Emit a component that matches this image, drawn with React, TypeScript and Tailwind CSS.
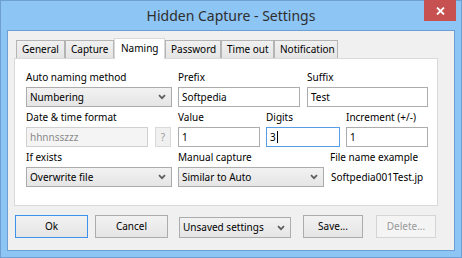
import React from 'react';

const font = "font-['Noto_Sans','Segoe_UI',sans-serif]";

const Chevron = () => (
    <svg width="8" height="6" viewBox="0 0 8 6" className="shrink-0">
        <path d="M1 1.2 L4 4.2 L7 1.2" fill="none" stroke="#5c5c5c" strokeWidth="1.7" />
    </svg>
);

const Select = ({ value, w }: { value: string; w: string }) => (
    <div className={`${w} h-[20px] border border-[#acacac] bg-gradient-to-b from-[#f2f2f2] to-[#e5e5e5] flex items-center justify-between pl-[3px] pr-[5px] text-[10px] text-black`}>
        <span>{value}</span>
        <Chevron />
    </div>
);

const Field = ({ value, w, focus }: { value: string; w: string; focus?: boolean }) => (
    <div className={`${w} h-[20px] border ${focus ? 'border-[#569de5]' : 'border-[#acacac]'} bg-white flex items-center pl-[3px] text-[10px] text-black`}>
        <span>{value}</span>
        {focus && <span className="w-px h-[12px] bg-black ml-px" />}
    </div>
);

const Label = ({ text, w }: { text: string; w: string }) => (
    <div className={`${w} h-[16px] leading-[16px] text-[10px] text-black whitespace-nowrap`}>{text}</div>
);

const Button = ({ text, w, primary, disabled }: { text: string; w: string; primary?: boolean; disabled?: boolean }) => (
    <div className={`${w} h-[23px] border ${primary ? 'border-[#3c93ec]' : disabled ? 'border-[#d5d5d5]' : 'border-[#acacac]'} ${disabled ? 'bg-[#f4f4f4] text-[#9a9a9a]' : 'bg-gradient-to-b from-[#f2f2f2] to-[#e5e5e5] text-black'} flex items-center justify-center text-[10px]`}>
        {text}
    </div>
);

const tabs = [
    { name: 'General', w: 'w-[49px]' },
    { name: 'Capture', w: 'w-[49px]' },
    { name: 'Naming', w: 'w-[51px]', active: true },
    { name: 'Password', w: 'w-[56px]' },
    { name: 'Time out', w: 'w-[53px]' },
    { name: 'Notification', w: 'w-[64px]' },
];

export default function App() {
    return (
        <div className={`w-[462px] h-[258px] bg-[#8dc5f5] shadow-[inset_0_0_0_1px_#6d9fd2] relative ${font}`}>
            {/* title bar */}
            <div className="h-[30px] flex items-center justify-center text-[14px] text-[#2e2e2e]">
                Hidden Capture - Settings
            </div>
            <div className="absolute top-0 right-[6px] w-[32px] h-[21px] bg-[#c75050] flex items-center justify-center">
                <svg width="9" height="8" viewBox="0 0 9 8">
                    <path d="M1 0.5 L8 7.5 M8 0.5 L1 7.5" stroke="#fff" strokeWidth="1.8" />
                </svg>
            </div>

            {/* client */}
            <div className="ml-[7px] w-[448px] h-[221px] border border-[#6c9fd3] bg-[#f0f0f0]">
                <div className="mt-[7px] ml-[6px]">
                    {/* tabs */}
                    <div className="flex items-end h-[20px] pl-[2px]">
                        {tabs.map((t) =>
                            t.active ? (
                                <div key={t.name} className={`${t.w} h-[21px] -mb-px relative z-10 bg-white border border-b-0 border-[#d9d9d9] text-[10px] text-black pl-[6px] pt-[2px] leading-[14px]`}>
                                    {t.name}
                                </div>
                            ) : (
                                <div key={t.name} className={`${t.w} h-[18px] bg-gradient-to-b from-[#f0f0f0] to-[#e5e5e5] border border-b-0 border-[#b4b4b4] text-[10px] text-black pl-[5px] leading-[17px]`}>
                                    {t.name}
                                </div>
                            )
                        )}
                    </div>

                    {/* panel */}
                    <div className="w-[424px] h-[148px] border border-[#d9d9d9] bg-white pl-[11px] pt-[10px] overflow-hidden">
                        {/* row 1 */}
                        <div className="flex">
                            <Label text="Auto naming method" w="w-[152px]" />
                            <Label text="Prefix" w="w-[129px]" />
                            <Label text="Suffix" w="w-[121px]" />
                        </div>
                        <div className="flex mt-[2px]">
                            <Select value="Numbering" w="w-[146px]" />
                            <div className="ml-[6px]"><Field value="Softpedia" w="w-[122px]" /></div>
                            <div className="ml-[7px]"><Field value="Test" w="w-[121px]" /></div>
                        </div>

                        {/* row 2 */}
                        <div className="flex mt-[2px]">
                            <Label text="Date & time format" w="w-[152px]" />
                            <Label text="Value" w="w-[88px]" />
                            <Label text="Digits" w="w-[80px]" />
                            <Label text="Increment (+/-)" w="w-[82px]" />
                        </div>
                        <div className="flex mt-[2px]">
                            <div className="w-[122px] h-[20px] border border-[#d0d0d0] bg-[#f4f4f4] flex items-center pl-[3px] text-[10px] text-[#8a8a8a]">hhnnsszzz</div>
                            <div className="ml-[7px] w-[16px] h-[20px] border border-[#d9d9d9] bg-[#f0f0f0] flex items-center justify-center text-[10px] text-[#9a9a9a]">?</div>
                            <div className="ml-[7px]"><Field value="1" w="w-[82px]" /></div>
                            <div className="ml-[6px]"><Field value="3" w="w-[74px]" focus /></div>
                            <div className="ml-[6px]"><Field value="1" w="w-[82px]" /></div>
                        </div>

                        {/* row 3 */}
                        <div className="flex mt-[2px]">
                            <Label text="If exists" w="w-[152px]" />
                            <Label text="Manual capture" w="w-[152px]" />
                            <Label text="File name example" w="w-[100px]" />
                        </div>
                        <div className="flex mt-[2px] items-center">
                            <Select value="Overwrite file" w="w-[146px]" />
                            <div className="ml-[6px]"><Select value="Similar to Auto" w="w-[146px]" /></div>
                            <div className="ml-[7px] text-[10px] text-black whitespace-nowrap">Softpedia001Test.jp</div>
                        </div>
                    </div>
                </div>

                {/* bottom buttons */}
                <div className="flex items-start mt-[9px] pl-[7px]">
                    <Button text="Ok" w="w-[73px]" primary />
                    <div className="ml-[7px]"><Button text="Cancel" w="w-[73px]" /></div>
                    <div className="ml-[11px] mt-[2px]">
                        <div className="w-[112px] h-[21px] border border-[#acacac] bg-gradient-to-b from-[#f2f2f2] to-[#e5e5e5] flex items-center justify-between pl-[3px] pr-[5px] text-[10px] text-black">
                            <span>Unsaved settings</span>
                            <Chevron />
                        </div>
                    </div>
                    <div className="ml-[12px]"><Button text="Save..." w="w-[60px]" /></div>
                    <div className="ml-[13px]"><Button text="Delete..." w="w-[60px]" disabled /></div>
                </div>
            </div>
        </div>
    );
}
